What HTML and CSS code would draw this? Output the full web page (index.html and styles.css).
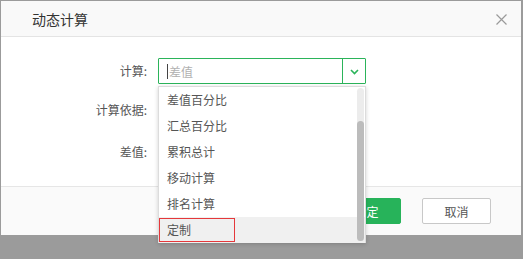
FILE: index.html
```html
<!DOCTYPE html>
<html lang="zh">
<head>
<meta charset="utf-8">
<link rel="stylesheet" href="styles.css">
</head>
<body>
<div class="dialog">
  <div class="header">
    <span class="title">动态计算</span>
    <svg class="close" width="11" height="11" viewBox="0 0 11 11"><path d="M0.5 0.5L10.5 10.5M10.5 0.5L0.5 10.5" stroke="#9a9a9a" stroke-width="1.2" fill="none"/></svg>
  </div>
  <div class="body">
    <div class="row r1">
      <label class="lbl">计算:</label>
      <div class="select-wrap">
        <div class="select">
          <div class="field"><span class="caret"></span><span class="ph">差值</span></div>
          <div class="arrow"><svg width="9" height="6" viewBox="0 0 9 6"><path d="M1 1L4.5 4.5L8 1" stroke="#2bb45a" stroke-width="1.6" fill="none"/></svg></div>
        </div>
        <div class="menu">
          <ul class="items">
            <li>差值百分比</li>
            <li>汇总百分比</li>
            <li>累积总计</li>
            <li>移动计算</li>
            <li>排名计算</li>
            <li class="active"><span class="mark"></span>定制</li>
          </ul>
          <div class="track"><div class="thumb"></div></div>
        </div>
      </div>
    </div>
    <div class="row r2"><label class="lbl">计算依据:</label></div>
    <div class="row r3"><label class="lbl">差值:</label></div>
  </div>
  <div class="footer">
    <button class="btn ok">确定</button>
    <button class="btn cancel">取消</button>
  </div>
</div>
</body>
</html>
```
FILE: styles.css
```css
* { box-sizing: border-box; }
html, body { margin: 0; padding: 0; }
body {
  background: #9b9b9b;
  width: 523px;
  height: 259px;
  overflow: hidden;
  font-family: "Noto Sans CJK SC", "Noto Sans", sans-serif;
  color: #555;
  font-size: 12px;
}
.dialog {
  margin: 1px 0 0 1px;
  width: 520px;
  height: 234px;
  background: #fff;
  display: flex;
  flex-direction: column;
}
.header {
  height: 36px;
  background: #f9f9f9;
  border-bottom: 1px solid #e4e4e4;
  display: flex;
  align-items: center;
  justify-content: space-between;
  padding: 0 14px 0 31px;
}
.title { font-size: 14px; color: #333; line-height: 1; }
.close { display: block; margin-top: 1px; }
.body {
  height: 149px;
  padding-top: 21px;
  background: #fff;
}
.row {
  display: grid;
  grid-template-columns: 146px 208px;
  column-gap: 11px;
  align-items: center;
  height: 26px;
}
.r2 { margin-top: 13px; }
.r3 { margin-top: 16px; }
.lbl { text-align: right; line-height: 26px; color: #555; }
.select-wrap { position: relative; }
.select {
  display: flex;
  height: 26px;
  border: 1px solid #2bb45a;
  border-radius: 1px;
  background: #fff;
}
.field {
  flex: 1;
  display: flex;
  align-items: center;
  padding-left: 8px;
  border-right: 1px solid #2bb45a;
}
.caret { width: 1px; height: 15px; background: #444; margin-right: 1px; }
.ph { color: #b0b0b0; font-size: 12px; }
.arrow {
  width: 22px;
  display: flex;
  align-items: center;
  justify-content: center;
  padding-top: 1px;
}
.menu {
  position: absolute;
  left: 0;
  top: 28px;
  width: 208px;
  height: 157px;
  background: #fff;
  border: 1px solid #dcdcdc;
  box-shadow: 0 1px 4px rgba(0,0,0,0.18);
  z-index: 5;
}
.items { list-style: none; margin: 0; padding: 0; }
.items li {
  height: 26px;
  line-height: 26px;
  padding-left: 8px;
  color: #555;
  position: relative;
}
.items li.active { background: #f0f0f0; }
.mark {
  position: absolute;
  left: 0;
  top: 1px;
  width: 76px;
  height: 24px;
  border: 1px solid #e5383b;
}
.track {
  position: absolute;
  right: 1px;
  top: 1px;
  bottom: 1px;
  width: 7px;
  background: #ececec;
  border-radius: 4px;
}
.thumb {
  position: absolute;
  left: 0;
  right: 0;
  top: 33px;
  bottom: 0;
  background: #bcbcbc;
  border-radius: 4px;
}
.footer {
  flex: 1;
  background: #fafafa;
  border-top: 1px solid #e6e6e6;
  display: flex;
  justify-content: flex-end;
  align-items: flex-start;
  padding: 11px 30px 0 0;
  gap: 21px;
}
.btn {
  width: 69px;
  height: 26px;
  font-family: inherit;
  font-size: 12px;
  border-radius: 2px;
  padding: 0;
}
.ok { background: #27b35a; border: 1px solid #27b35a; color: #fff; }
.cancel { background: #fff; border: 1px solid #c8c8c8; color: #555; }
```
